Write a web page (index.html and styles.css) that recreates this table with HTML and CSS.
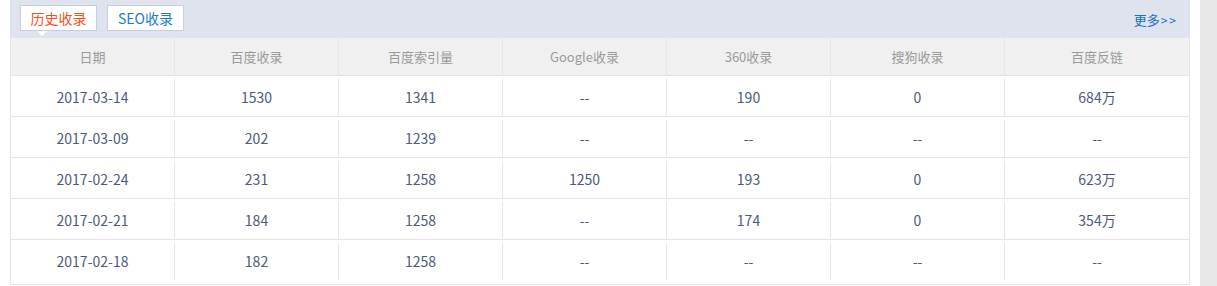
FILE: index.html
```html
<!DOCTYPE html>
<html lang="zh">
<head>
<meta charset="utf-8">
<link rel="stylesheet" href="styles.css">
</head>
<body>
<div class="page">
  <div class="panel">
    <div class="bar">
      <div class="tabs">
        <span class="tab active">历史收录</span>
        <span class="tab">SEO收录</span>
      </div>
      <a class="more">更多<span class="arr">&gt;&gt;</span></a>
    </div>
    <div class="table">
      <div class="row head">
        <div class="c">日期</div><div class="c">百度收录</div><div class="c">百度索引量</div><div class="c">Google收录</div><div class="c">360收录</div><div class="c">搜狗收录</div><div class="c">百度反链</div>
      </div>
      <div class="row">
        <div class="c">2017-03-14</div><div class="c">1530</div><div class="c">1341</div><div class="c">--</div><div class="c">190</div><div class="c">0</div><div class="c">684万</div>
      </div>
      <div class="row">
        <div class="c">2017-03-09</div><div class="c">202</div><div class="c">1239</div><div class="c">--</div><div class="c">--</div><div class="c">--</div><div class="c">--</div>
      </div>
      <div class="row">
        <div class="c">2017-02-24</div><div class="c">231</div><div class="c">1258</div><div class="c">1250</div><div class="c">193</div><div class="c">0</div><div class="c">623万</div>
      </div>
      <div class="row">
        <div class="c">2017-02-21</div><div class="c">184</div><div class="c">1258</div><div class="c">--</div><div class="c">174</div><div class="c">0</div><div class="c">354万</div>
      </div>
      <div class="row last">
        <div class="c">2017-02-18</div><div class="c">182</div><div class="c">1258</div><div class="c">--</div><div class="c">--</div><div class="c">--</div><div class="c">--</div>
      </div>
    </div>
  </div>
  <div class="scroll"></div>
</div>
</body>
</html>
```

FILE: styles.css
```css
html, body {
  margin: 0;
  padding: 0;
  background: #fff;
}
body {
  font-family: "Noto Sans CJK SC", "Noto Sans", sans-serif;
  height: 286px;
  overflow: hidden;
}
.page {
  display: flex;
  height: 286px;
  padding-left: 10px;
  gap: 10px;
}
.panel {
  width: 1180px;
  display: flex;
  flex-direction: column;
}
.bar {
  height: 38px;
  background: #dfe3ee;
  display: flex;
  align-items: flex-start;
  justify-content: space-between;
  padding: 5px 12px 0 10px;
  box-sizing: border-box;
}
.tabs {
  display: flex;
  gap: 10px;
}
.tab {
  position: relative;
  width: 77px;
  height: 26px;
  box-sizing: border-box;
  border: 1px solid #c7cede;
  background: #fff;
  font-size: 14px;
  line-height: 25px;
  text-align: center;
  color: #1a7bd4;
}
.tab.active {
  color: #f4511e;
}
.tab.active::after {
  content: "";
  position: absolute;
  left: 16px;
  top: 25px;
  width: 0;
  height: 0;
  border-left: 5px solid transparent;
  border-right: 5px solid transparent;
  border-top: 5px solid #fff;
}
.more {
  margin-top: 5px;
  font-size: 13px;
  color: #1a6fcc;
}
.more .arr {
  font-size: 12px;
  letter-spacing: 2px;
  margin-left: 1px;
}
.table {
  border: 1px solid #e5e5e5;
  border-top: none;
  background: #fff;
}
.row {
  display: grid;
  grid-template-columns: 163px 164px 164px 164px 164px 174px 185px;
  padding-top: 3px;
  border-bottom: 1px solid #e5e5e5;
}
.row.head {
  padding-top: 0;
  background: #f0f0f0;
}
.row.last {
  border-bottom: none;
  padding-bottom: 4px;
}
.c {
  height: 37px;
  line-height: 37px;
  text-align: center;
  font-size: 14px;
  color: #4c5a7c;
}
.c + .c {
  border-left: 1px solid #e6e6e6;
}
.head .c {
  font-size: 13px;
  color: #9a9a9a;
}
.scroll {
  width: 17px;
  height: 286px;
  background: #e8e8e8;
}
```
